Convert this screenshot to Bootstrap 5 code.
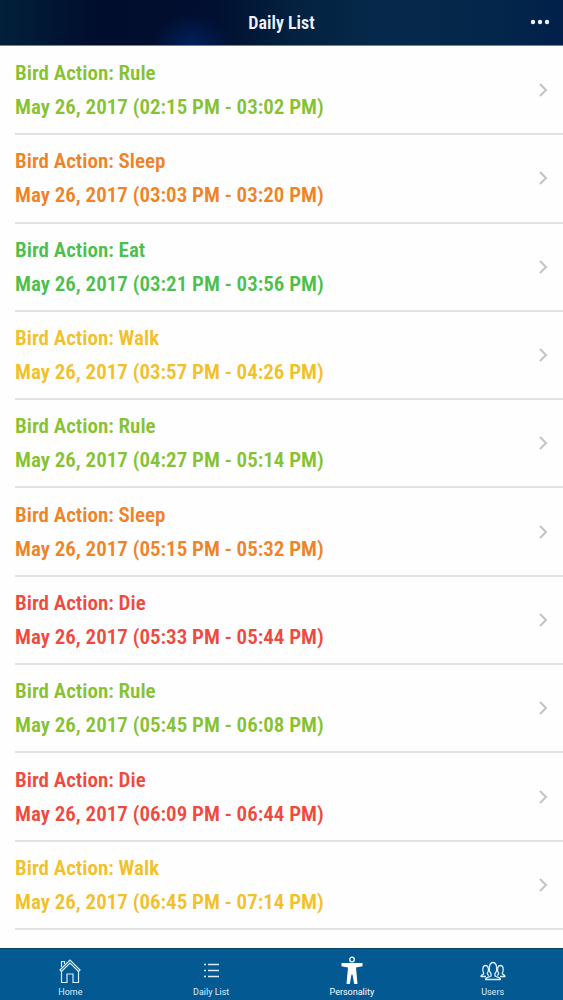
<!DOCTYPE html>
<html lang="en">
<head>
<meta charset="utf-8">
<meta name="viewport" content="width=device-width, initial-scale=1">
<title>Daily List</title>
<link href="https://cdn.jsdelivr.net/npm/bootstrap@5.3.0/dist/css/bootstrap.min.css" rel="stylesheet">
<style>
  body { font-family: "Roboto Condensed", Roboto, sans-serif; background: #fefefe; }
  .app-bar {
    height: 46px; color: #eef3ff; border-bottom: 1px solid #6c8796;
    background:
      radial-gradient(ellipse 40px 32px at 34% 100%, #00205c, transparent),
      linear-gradient(90deg, #02203a 0%, #010d2c 18%, #010f30 38%, #04213f 52%, #06294b 68%, #04264a 88%, #02204a 100%);
  }
  .app-title { font-size: 18px; line-height: 24px; font-weight: 600; }
  .more-btn { width: 46px; height: 44px; color: #eef3ff; }
  .entries { min-height: 0; padding-top: 1px; overflow-y: auto; scrollbar-width: none; }
  .entries::-webkit-scrollbar { display: none; }
  .entry { flex: 0 0 9.8%; min-height: 72px; margin-left: 15px; padding-right: 15px; border-bottom: 2px solid #e1e1e1; }
  .entry-text { font-size: 21px; line-height: 34px; font-weight: 600; }
  .chevron { color: #c4c4c6; }
  .rule { color: #86c232; }
  .sleep { color: #f08326; }
  .eat { color: #4cbf4c; }
  .walk { color: #f2c029; }
  .die { color: #f04a3e; }
  .tab-bar { height: 52px; background: #035a92; border-top: 1px solid #0a4468; }
  .tab-link { color: #dcecfa; font-family: Roboto, sans-serif; font-size: 9px; line-height: 12px; padding-bottom: 2px; }
  .tab-link.active { color: #fff; }
</style>
</head>
<body>
<div class="d-flex flex-column vh-100 overflow-hidden">
  <header class="app-bar position-relative d-flex align-items-center justify-content-center flex-shrink-0">
    <h1 class="app-title m-0">Daily List</h1>
    <button type="button" class="more-btn btn p-0 border-0 d-flex align-items-center justify-content-center position-absolute end-0 top-0" aria-label="More">
      <svg width="20" height="6" viewBox="0 0 20 6" fill="currentColor" aria-hidden="true"><circle cx="3" cy="3" r="2.200"/><circle cx="10" cy="3" r="2.200"/><circle cx="17" cy="3" r="2.200"/></svg>
    </button>
  </header>
  <main class="entries d-flex flex-column flex-grow-1" id="entries"></main>
  <nav class="tab-bar d-flex flex-shrink-0" aria-label="Main">
    <a href="#" class="tab-link flex-fill w-25 d-flex flex-column align-items-center justify-content-end text-decoration-none">
      <svg width="24" height="28" viewBox="0 0 24 28" fill="none" stroke="currentColor" stroke-width="1.2" aria-hidden="true"><path d="M2 12 12 2l10 10-1.500 1.500L12 5l-8.500 8.500z"/><path d="M3.500 9V3.500h3V6M3.500 13v11.500h5.500V16h6v8.500h5.500V13"/></svg>
      <span>Home</span>
    </a>
    <a href="#" class="tab-link flex-fill w-25 d-flex flex-column align-items-center justify-content-end text-decoration-none">
      <svg width="24" height="28" viewBox="0 0 24 28" fill="none" stroke="currentColor" stroke-width="1.300" aria-hidden="true"><path d="M5 6.500h2M9 6.500h11M5 12.500h2M9 12.500h11M5 18.500h2M9 18.500h11"/></svg>
      <span>Daily List</span>
    </a>
    <a href="#" class="tab-link active flex-fill w-25 d-flex flex-column align-items-center justify-content-end text-decoration-none" aria-current="page">
      <svg width="24" height="30" viewBox="0 0 24 30" fill="currentColor" aria-hidden="true"><circle cx="12" cy="3.500" r="2.300" fill="none" stroke="currentColor" stroke-width="1.300"/><path d="M1.500 7h21v3.300L16 11.500l1.500 16.500h-3.300L12.500 18.500h-1L9.800 28H6.500L8 11.500l-6.500-1.200z"/></svg>
      <span>Personality</span>
    </a>
    <a href="#" class="tab-link flex-fill w-25 d-flex flex-column align-items-center justify-content-end text-decoration-none">
      <svg width="26" height="28" viewBox="0 0 26 28" fill="none" stroke="currentColor" stroke-width="1.300" stroke-linejoin="round" aria-hidden="true"><path d="M11 15.500v2.500c-2 1.500-5.500 1-5.500 3.500h15c0-2.500-3.500-2-5.500-3.500v-2.500c3-3 2-11-2-11s-5 8-2 11z"/><path d="M9 17.500c-1-.3-1.700-1-1.700-2.200C9.500 12.500 8.500 7.500 5.500 7.500S2 12.500 3.800 15.300c0 1.500-2.800 1-2.800 3.200h5M17 17.500c1-.3 1.700-1 1.700-2.200-2.200-2.800-1.200-7.800 1.800-7.800s3.500 5 1.700 7.800c0 1.500 2.800 1 2.800 3.200h-5"/></svg>
      <span>Users</span>
    </a>
  </nav>
</div>
<script>
  const entries = [
    ['Rule', '02:15 PM', '03:02 PM'],
    ['Sleep', '03:03 PM', '03:20 PM'],
    ['Eat', '03:21 PM', '03:56 PM'],
    ['Walk', '03:57 PM', '04:26 PM'],
    ['Rule', '04:27 PM', '05:14 PM'],
    ['Sleep', '05:15 PM', '05:32 PM'],
    ['Die', '05:33 PM', '05:44 PM'],
    ['Rule', '05:45 PM', '06:08 PM'],
    ['Die', '06:09 PM', '06:44 PM'],
    ['Walk', '06:45 PM', '07:14 PM'],
    ['Sleep', '07:15 PM', '07:32 PM']
  ];
  document.getElementById('entries').innerHTML = entries.map(([action, from, to]) => `
    <a href="#" class="entry ${action.toLowerCase()} d-flex align-items-center justify-content-between text-decoration-none">
      <span class="entry-text"><span class="d-block">Bird Action: ${action}</span><span class="d-block">May 26, 2017 (${from} - ${to})</span></span>
      <svg class="chevron" width="10" height="16" viewBox="0 0 10 16" fill="none" stroke="currentColor" stroke-width="2" aria-hidden="true"><path d="M2 2l6 6-6 6"/></svg>
    </a>`).join('');
</script>
<script src="https://cdn.jsdelivr.net/npm/bootstrap@5.3.0/dist/js/bootstrap.bundle.min.js"></script>
</body>
</html>
